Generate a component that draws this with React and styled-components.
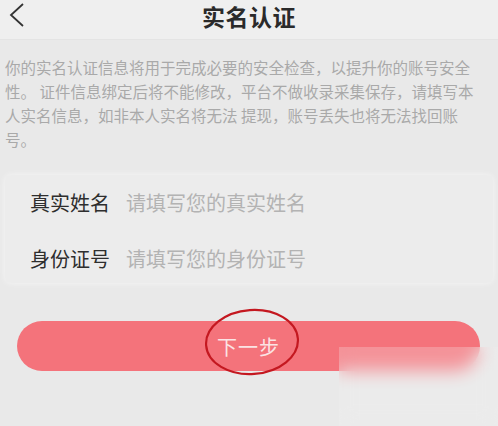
import React from 'react';
import styled, { createGlobalStyle } from 'styled-components';

const GlobalStyle = createGlobalStyle`
  html, body {
    margin: 0;
    padding: 0;
    background: #e9e9e9;
  }
  body {
    font-family: "Noto Sans CJK SC", "Liberation Sans", sans-serif;
  }
`;

const Page = styled.div`
  position: relative;
  width: 498px;
  height: 426px;
  overflow: hidden;
  background: #e9e9e9;
`;

const Header = styled.div`
  position: relative;
  height: 40px;
  display: flex;
  align-items: center;
  justify-content: center;
  background: #efefef;
  border-bottom: 1px solid #e4e4e4;
  box-sizing: border-box;

  .back {
    position: absolute;
    left: 9px;
    top: 3px;
  }

  .title {
    font-size: 23px;
    font-weight: 700;
    color: #2a2a2a;
    letter-spacing: 0.5px;
    margin-top: -8px;
  }
`;

const Notice = styled.div`
  padding: 15px 0 0 5px;
  color: #a9a9a9;
  font-size: 15.5px;
  line-height: 24px;

  span {
    display: block;
    white-space: nowrap;
  }
`;

const Card = styled.div`
  margin: 24px 5px 0;
  height: 108px;
  background: #ececec;
  border-radius: 6px;
  box-shadow: 0 0 6px rgba(255, 255, 255, 0.6);
  display: flex;
  flex-direction: column;
  justify-content: center;
  gap: 16px;
  padding: 2px 0 0 25px;
  box-sizing: border-box;
`;

const Row = styled.div`
  display: flex;
  align-items: center;
  height: 40px;
  font-size: 20px;

  .label {
    color: #2e2e2e;
    font-weight: 400;
    width: 96px;
  }

  .placeholder {
    color: #b3b3b3;
  }
`;

const Button = styled.div`
  position: relative;
  margin: 38px 18px 0 17px;
  height: 50px;
  border-radius: 25px;
  background: #f4737b;
  display: flex;
  align-items: center;
  justify-content: center;
  color: #fbe3e4;
  font-size: 20px;
  letter-spacing: 1px;

  svg {
    position: absolute;
    left: 185px;
    top: -13px;
  }
`;

const Watermark = styled.div`
  position: absolute;
  left: 339px;
  top: 347px;
  right: 0;
  bottom: 0;
  backdrop-filter: blur(9px);
  background: rgba(245, 245, 245, 0.25);
`;

export default function App() {
  return (
    <Page>
      <GlobalStyle />
      <Header>
        <svg className="back" width="16" height="24" viewBox="0 0 16 24">
          <path d="M14 1 L2 12 L14 23" fill="none" stroke="#333" strokeWidth="1.8" />
        </svg>
        <div className="title">实名认证</div>
      </Header>
      <Notice>
        <span>你的实名认证信息将用于完成必要的安全检查，以提升你的账号安全</span>
        <span>性。 证件信息绑定后将不能修改，平台不做收录采集保存，请填写本</span>
        <span>人实名信息，如非本人实名将无法 提现，账号丢失也将无法找回账</span>
        <span>号。</span>
      </Notice>
      <Card>
        <Row>
          <span className="label">真实姓名</span>
          <span className="placeholder">请填写您的真实姓名</span>
        </Row>
        <Row>
          <span className="label">身份证号</span>
          <span className="placeholder">请填写您的身份证号</span>
        </Row>
      </Card>
      <Button>
        下一步
        <svg width="100" height="70" viewBox="0 0 100 70">
          <ellipse cx="50" cy="34" rx="46" ry="32" fill="none" stroke="#c41820" strokeWidth="2.2" transform="rotate(-4 50 34)" />
        </svg>
      </Button>
      <Watermark />
    </Page>
  );
}
